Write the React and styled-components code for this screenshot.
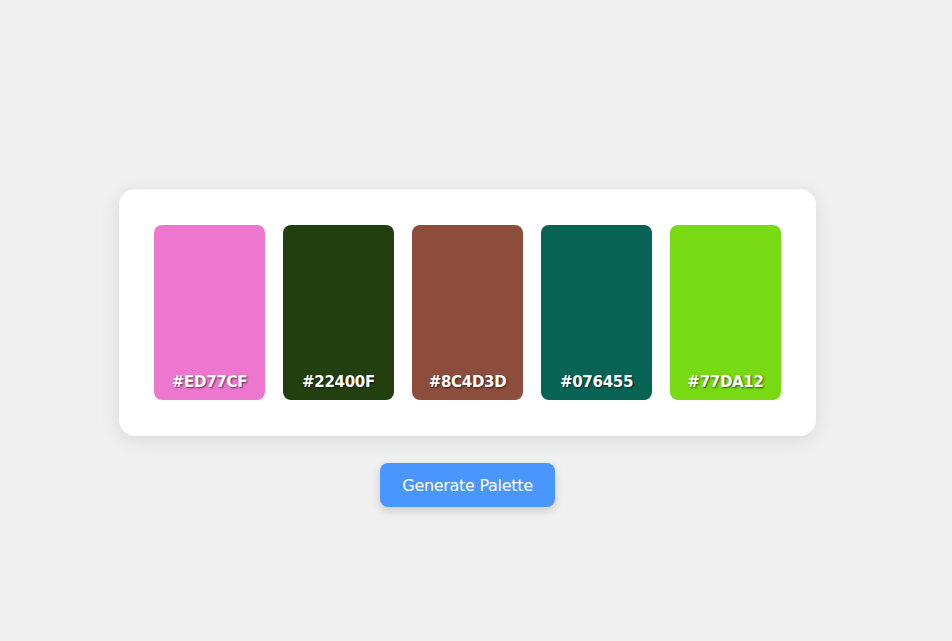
import React, { useState } from "react";
import styled, { createGlobalStyle } from "styled-components";

const GlobalStyle = createGlobalStyle`
  body {
    margin: 0;
    background: #f0f0f0;
    font-family: "DejaVu Sans", Verdana, sans-serif;
  }
`;

const Page = styled.div`
  min-height: 100vh;
  box-sizing: border-box;
  padding: 189px 17px 0 0;
  display: flex;
  flex-direction: column;
  align-items: center;
  gap: 27px;
`;

const Card = styled.div`
  background: #fff;
  border-radius: 16px;
  padding: 36px 35px;
  display: flex;
  gap: 18px;
  box-shadow: 0 4px 20px rgba(0, 0, 0, 0.1);
`;

const Swatch = styled.div`
  width: 111px;
  height: 175px;
  border-radius: 8px;
  background: ${(p) => p.$color};
  display: flex;
  align-items: flex-end;
  justify-content: center;
  padding-bottom: 9px;
  box-sizing: border-box;
`;

const Label = styled.span`
  color: #fff;
  font-weight: bold;
  font-size: 15px;
  letter-spacing: -0.3px;
  text-shadow: 1px 1px 2px rgba(0, 0, 0, 0.6);
`;

const Button = styled.button`
  width: 175px;
  height: 44px;
  border: none;
  border-radius: 8px;
  background: #4a96ff;
  color: #fff;
  font-family: "DejaVu Sans", Verdana, sans-serif;
  font-size: 16px;
  letter-spacing: -0.3px;
  cursor: pointer;
  box-shadow: 0 4px 10px rgba(0, 0, 0, 0.15);
`;

const initial = ["#ED77CF", "#22400F", "#8C4D3D", "#076455", "#77DA12"];

const randomHex = () =>
  "#" +
  Math.floor(Math.random() * 0xffffff)
    .toString(16)
    .padStart(6, "0")
    .toUpperCase();

export default function App() {
  const [colors, setColors] = useState(initial);

  return (
    <>
      <GlobalStyle />
      <Page>
        <Card>
          {colors.map((c, i) => (
            <Swatch key={i} $color={c}>
              <Label>{c}</Label>
            </Swatch>
          ))}
        </Card>
        <Button onClick={() => setColors(colors.map(randomHex))}>
          Generate Palette
        </Button>
      </Page>
    </>
  );
}
